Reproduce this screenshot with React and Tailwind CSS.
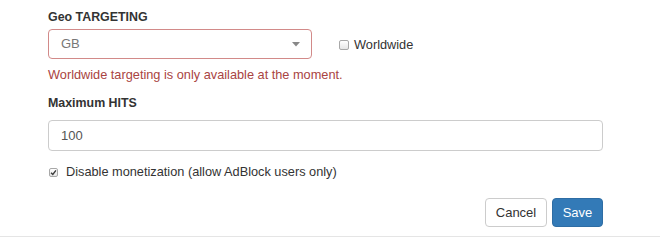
import React from "react";

function Box({ checked, size = 10 }) {
  return (
    <span
      className="inline-flex items-center justify-center rounded-[2px] border border-[#a8a8a8] bg-gradient-to-b from-[#ffffff] to-[#e6e6e6] shrink-0"
      style={{ width: size, height: size }}
    >
      {checked && (
        <svg width="7" height="7" viewBox="0 0 8 8">
          <path d="M1.2 4.2 L3.2 6.2 L6.8 1.5" stroke="#3a3a3a" strokeWidth="1.6" fill="none" />
        </svg>
      )}
    </span>
  );
}

export default function App() {
  return (
    <div className="w-[660px] h-[242px] bg-white font-['Liberation_Sans',Arial,sans-serif] text-[12.75px] text-[#333] overflow-hidden">
      <div className="pl-[48px] pr-[57px] pt-[8px]">
        <div className="font-bold text-[12.4px] leading-[18px] h-[21px]">Geo TARGETING</div>
        <div className="flex items-center">
          <div className="w-[264px] h-[30px] border border-[#d28a89] rounded-[4px] flex items-center justify-between pl-[12px] pr-[11px] text-[#777] text-[13px]">
            <span>GB</span>
            <svg width="8" height="5" viewBox="0 0 8 5">
              <path d="M0 0 H8 L4 4.5 Z" fill="#888" />
            </svg>
          </div>
          <label className="flex items-center ml-[27px] gap-[5px] pt-[1px]">
            <Box checked={false} />
            <span className="leading-[18px]">Worldwide</span>
          </label>
        </div>
        <div className="text-[#a94442] leading-[18px] mt-[7px]">
          Worldwide targeting is only available at the moment.
        </div>
        <div className="font-bold text-[12.4px] leading-[18px] mt-[10px]">Maximum HITS</div>
        <div className="mt-[8px] h-[31px] border border-[#ccc] rounded-[4px] flex items-center pl-[12px] text-[#555] text-[13px]">
          100
        </div>
        <label className="flex items-center gap-[8px] mt-[12px] pl-[1px]">
          <Box checked={true} size={9} />
          <span className="leading-[18px]">Disable monetization (allow AdBlock users only)</span>
        </label>
        <div className="flex justify-end gap-[5px] mt-[17px]">
          <button className="h-[29px] w-[62px] border border-[#ccc] rounded-[4px] bg-white text-[#333] text-[13px]">
            Cancel
          </button>
          <button className="h-[29px] w-[51px] border border-[#2e6da4] rounded-[4px] bg-[#337ab7] text-white text-[13px]">
            Save
          </button>
        </div>
      </div>
      <div className="mt-[9px] h-px bg-[#e5e5e5]" />
    </div>
  );
}
